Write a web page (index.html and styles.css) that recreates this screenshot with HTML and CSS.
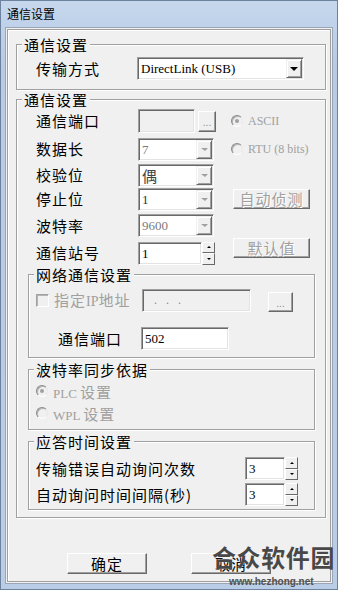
FILE: index.html
```html
<!DOCTYPE html>
<html lang="zh-CN">
<head>
    <meta charset="UTF-8">
    <meta name="viewport" content="width=device-width, initial-scale=1.0">
    <title>通信设置</title>
    <link rel="stylesheet" href="styles.css">
</head>
<body>
    <div class="window">
        <div class="titlebar">通信设置</div>
        <div class="client">
            <div class="panel">
                <fieldset class="group g-mode">
                    <legend>通信设置</legend>
                    <div class="mode-body">
                        <span class="lbl mode-lbl">传输方式</span>
                        <div class="edit combo combo-wide">
                            <span class="val">DirectLink (USB)</span>
                            <span class="drop"><i class="tri"></i></span>
                        </div>
                    </div>
                </fieldset>

                <fieldset class="group g-comm">
                    <legend>通信设置</legend>
                    <div class="comm-body">
                        <div class="comm-grid">
                            <span class="lbl">通信端口</span>
                            <div class="pair">
                                <div class="edit off port-box"></div>
                                <div class="btn dots">...</div>
                            </div>
                            <div class="opt"><span class="radio on"></span>ASCII</div>

                            <span class="lbl">数据长</span>
                            <div class="edit combo">
                                <span class="val grey">7</span>
                                <span class="drop"><i class="tri dim"></i></span>
                            </div>
                            <div class="opt"><span class="radio"></span>RTU (8 bits)</div>

                            <span class="lbl">校验位</span>
                            <div class="edit combo">
                                <span class="val cjk">偶</span>
                                <span class="drop"><i class="tri dim"></i></span>
                            </div>
                            <span></span>

                            <span class="lbl">停止位</span>
                            <div class="edit combo">
                                <span class="val dark">1</span>
                                <span class="drop"><i class="tri dim"></i></span>
                            </div>
                            <div class="btn off wide-btn">自动侦测</div>

                            <span class="lbl">波特率</span>
                            <div class="edit combo">
                                <span class="val grey">9600</span>
                                <span class="drop"><i class="tri dim"></i></span>
                            </div>
                            <span></span>

                            <span class="lbl">通信站号</span>
                            <div class="spin">
                                <div class="edit spin-box"><span class="val">1</span></div>
                                <div class="arrows">
                                    <span class="arrow"><i class="up"></i></span>
                                    <span class="arrow"><i class="down"></i></span>
                                </div>
                            </div>
                            <div class="btn off wide-btn default-btn">默认值</div>
                        </div>

                        <fieldset class="group sub g-net">
                            <legend>网络通信设置</legend>
                            <div class="net-body">
                                <div class="net-row">
                                    <span class="check"></span>
                                    <span class="lbl off-text ip-lbl">指定<span class="latin">IP</span>地址</span>
                                    <div class="edit off ip-box"><span class="ip-dots">.&nbsp;&nbsp;&nbsp;.&nbsp;&nbsp;&nbsp;.</span></div>
                                    <div class="btn dots ip-btn">...</div>
                                </div>
                                <div class="net-row2">
                                    <span class="lbl net-lbl">通信端口</span>
                                    <div class="edit net-port"><span class="val">502</span></div>
                                </div>
                            </div>
                        </fieldset>

                        <fieldset class="group sub g-baud">
                            <legend>波特率同步依据</legend>
                            <div class="baud-body">
                                <div class="opt opt-row"><span class="radio on"></span><span>PLC <span class="cjk-opt">设置</span></span></div>
                                <div class="opt opt-row"><span class="radio"></span><span>WPL <span class="cjk-opt">设置</span></span></div>
                            </div>
                        </fieldset>

                        <fieldset class="group sub g-resp">
                            <legend>应答时间设置</legend>
                            <div class="resp-body">
                                <div class="resp-row">
                                    <span class="lbl resp-lbl">传输错误自动询问次数</span>
                                    <div class="spin">
                                        <div class="edit resp-box"><span class="val">3</span></div>
                                        <div class="arrows">
                                            <span class="arrow"><i class="up"></i></span>
                                            <span class="arrow"><i class="down"></i></span>
                                        </div>
                                    </div>
                                </div>
                                <div class="resp-row">
                                    <span class="lbl resp-lbl">自动询问时间间隔(秒)</span>
                                    <div class="spin">
                                        <div class="edit resp-box"><span class="val">3</span></div>
                                        <div class="arrows">
                                            <span class="arrow"><i class="up"></i></span>
                                            <span class="arrow"><i class="down"></i></span>
                                        </div>
                                    </div>
                                </div>
                            </div>
                        </fieldset>
                    </div>
                </fieldset>

                <div class="actions">
                    <div class="btn action">确定</div>
                    <div class="btn action">取消</div>
                </div>
            </div>
        </div>

        <div class="watermark">
            <div class="wm-big">合众软件园</div>
            <div class="wm-url">www.hezhong.net</div>
        </div>
    </div>
</body>
</html>
```

FILE: styles.css
```css
body {
    margin: 0;
    width: 338px;
    height: 590px;
    overflow: hidden;
    font-family: "Noto Sans CJK SC", sans-serif;
    color: #000;
}
.window {
    position: relative;
    box-sizing: border-box;
    height: 590px;
    border: 1px solid #6d829f;
    background: linear-gradient(#c6d7ed, #b7cbe5 60px, #b9cde6);
    padding: 0 4px 5px;
    display: flex;
    flex-direction: column;
}
.titlebar {
    height: 26px;
    line-height: 26px;
    padding-left: 2px;
    font-size: 12px;
}
.client {
    flex: 1;
    display: flex;
    flex-direction: column;
    background: #f0f0f0;
    border: 1px solid #9aa6b6;
    padding: 1px;
}
.panel {
    flex: 1;
    display: flex;
    flex-direction: column;
    border: 1px solid #a0a0a0;
    box-shadow: inset 1px 1px #fff;
}

/* group boxes */
.group {
    margin: 7px 4px 0 8px;
    padding: 0;
    min-width: 0;
    border: 1px solid #a0a0a0;
    box-shadow: inset 1px 1px #fff, 1px 1px #fff;
}
.group legend {
    margin-left: 5px;
    padding: 0 2px 0 2px;
    font-size: 15px;
    line-height: 15px;
    letter-spacing: 1px;
    background: #f0f0f0;
}
.g-comm {
    margin-top: 2px;
}
.group.sub {
    margin: 4px 0 0 0;
}
.g-net {
    margin-top: 1px !important;
}
.lbl {
    font-size: 15px;
    line-height: 16px;
    letter-spacing: 1px;
}
.off-text {
    color: #a0a0a0;
}
.latin {
    font-family: "Liberation Serif", serif;
    font-size: 14px;
    letter-spacing: 0;
}

/* fields */
.edit {
    box-sizing: border-box;
    height: 23px;
    display: flex;
    align-items: center;
    border: 1px solid;
    border-color: #a0a0a0 #fff #fff #a0a0a0;
    box-shadow: inset 1px 1px #696969, inset -1px -1px #e3e3e3;
    padding: 1px;
    background: #fff;
    font-family: "Liberation Serif", serif;
    font-size: 13px;
}
.edit.off {
    background: #f0f0f0;
}
.val {
    padding-left: 2px;
    padding-top: 1px;
}
.val.grey {
    color: #7b7b7b;
}
.val.dark {
    color: #333;
}
.val.cjk {
    font-family: "Noto Sans CJK SC", sans-serif;
    font-size: 15px;
    color: #444;
}
.combo {
    width: 76px;
}
.combo-wide {
    width: 167px;
}
.drop {
    margin-left: auto;
    box-sizing: border-box;
    width: 16px;
    height: 100%;
    display: flex;
    align-items: center;
    justify-content: center;
    border: 1px solid;
    border-color: #f0f0f0 #696969 #696969 #f0f0f0;
    box-shadow: inset 1px 1px #fff, inset -1px -1px #a0a0a0;
    background: #f0f0f0;
}
.tri {
    width: 0;
    height: 0;
    border-left: 4px solid transparent;
    border-right: 4px solid transparent;
    border-top: 4px solid #000;
}
.tri.dim {
    border-left-width: 4px;
    border-right-width: 3px;
    border-top: 3px solid #a0a0a0;
}

/* buttons */
.btn {
    box-sizing: border-box;
    display: flex;
    align-items: center;
    justify-content: center;
    border: 1px solid;
    border-color: #fff #696969 #696969 #fff;
    box-shadow: inset -1px -1px #a0a0a0;
    background: #f0f0f0;
    font-size: 15px;
    letter-spacing: 1px;
}
.btn.off {
    color: #a0a0a0;
    text-shadow: 1px 1px #fff;
}
.dots {
    width: 18px;
    height: 21px;
    font-family: "Liberation Sans", sans-serif;
    font-size: 10px;
    letter-spacing: 0;
    color: #8a8a8a;
    padding-top: 3px;
}
.wide-btn {
    width: 77px;
    height: 20px;
    margin-left: 2px;
    line-height: 16px;
}
.default-btn {
    align-self: start;
    margin-top: -2px;
}
.action {
    width: 80px;
    height: 21px;
    line-height: 16px;
}

/* radios and check */
.opt {
    display: flex;
    align-items: center;
    gap: 5px;
    font-family: "Liberation Serif", serif;
    font-size: 12px;
    color: #a0a0a0;
}
.radio {
    position: relative;
    box-sizing: border-box;
    width: 12px;
    height: 12px;
    border-radius: 50%;
    border: 1px solid;
    border-color: #8a8a8a #e8e8e8 #fff #8a8a8a;
    box-shadow: inset 1px 1px #b4b4b4;
    background: #f0f0f0;
}
.radio.on::after {
    content: "";
    position: absolute;
    left: 3px;
    top: 3px;
    width: 4px;
    height: 4px;
    border-radius: 50%;
    background: #a0a0a0;
}
.check {
    box-sizing: border-box;
    width: 13px;
    height: 13px;
    align-self: center;
    border: 1px solid;
    border-color: #a0a0a0 #fff #fff #a0a0a0;
    box-shadow: inset 1px 1px #b4b4b4;
    background: #f0f0f0;
}

/* spin boxes */
.spin {
    display: flex;
}
.arrows {
    display: flex;
    flex-direction: column;
    width: 13px;
}
.arrow {
    box-sizing: border-box;
    flex: 1;
    display: flex;
    align-items: center;
    justify-content: center;
    border: 1px solid;
    border-color: #fff #696969 #696969 #fff;
    background: #f0f0f0;
}
.up, .down {
    width: 0;
    height: 0;
    border-left: 2px solid transparent;
    border-right: 2px solid transparent;
}
.up {
    border-bottom: 2px solid #000;
}
.down {
    border-top: 2px solid #000;
}

/* group 1 */
.mode-body {
    display: flex;
    align-items: center;
    padding: 5px 0 9px 19px;
}
.mode-lbl {
    width: 101px;
}

/* group 2 */
.comm-body {
    padding: 0 10px 7px 11px;
}
.comm-grid {
    display: grid;
    grid-template-columns: 102px 93px auto;
    grid-template-rows: 28px 28px 24px 24px 29px 26px;
    align-items: center;
    padding-left: 8px;
}
.pair {
    display: flex;
    align-items: center;
    gap: 3px;
}
.port-box {
    width: 57px;
    height: 24px;
}
.spin-box {
    width: 64px;
}

/* network */
.net-body {
    padding: 7px 0 7px 7px;
}
.net-row {
    display: flex;
    align-items: flex-end;
    height: 23px;
}
.ip-lbl {
    width: 88px;
    margin-left: 5px;
    align-self: center;
}
.ip-box {
    width: 109px;
}
.ip-dots {
    padding-left: 10px;
    font-size: 12px;
    color: #888;
}
.ip-btn {
    width: 25px;
    height: 20px;
    margin-left: 17px;
}
.net-row2 {
    display: flex;
    align-items: center;
    margin-top: 15px;
    padding-left: 22px;
}
.net-lbl {
    width: 83px;
}
.net-port {
    width: 88px;
}

/* baud sync */
.baud-body {
    padding: 3px 0 5px 7px;
}
.opt-row {
    height: 22px;
    font-size: 13px;
}
.cjk-opt {
    font-family: "Noto Sans CJK SC", sans-serif;
    font-size: 15px;
    letter-spacing: 1px;
}

/* response time */
.resp-body {
    padding: 8px 0 3px 7px;
}
.resp-row {
    display: flex;
    align-items: center;
    height: 23px;
}
.resp-row + .resp-row {
    margin-top: 3px;
}
.resp-lbl {
    width: 209px;
}
.resp-box {
    width: 40px;
}

/* dialog buttons */
.actions {
    display: flex;
    gap: 44px;
    padding-left: 59px;
    margin-top: 35px;
}

/* watermark over the corner */
.watermark {
    position: absolute;
    left: 211px;
    top: 541px;
}
.wm-big {
    font-size: 24px;
    line-height: 30px;
    font-weight: 700;
    letter-spacing: 0.6px;
    color: #484848;
    text-shadow: 0 0 1px #fff;
}
.wm-url {
    margin: 5px 0 0 17px;
    font-family: "Liberation Sans", sans-serif;
    font-size: 10px;
    font-weight: 700;
    line-height: 10px;
    color: #505050;
}
```
